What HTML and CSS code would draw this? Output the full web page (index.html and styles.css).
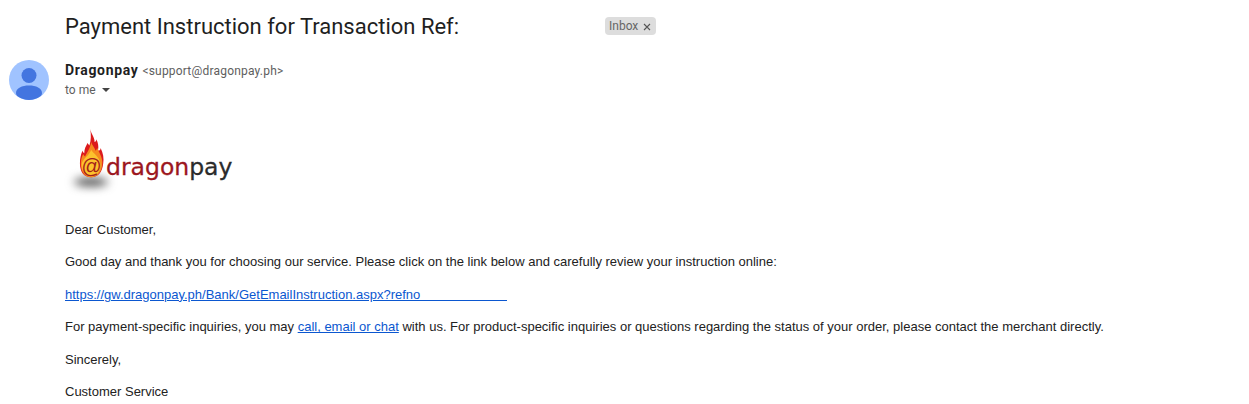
FILE: index.html
```html
<!DOCTYPE html>
<html lang="en">
<head>
  <meta charset="UTF-8">
  <title>Payment Instruction</title>
  <link rel="stylesheet" href="styles.css">
</head>
<body>

  <!-- Subject -->
  <div class="subject">
    <h1 class="subject-title">Payment Instruction for Transaction Ref:</h1>
    <span class="label">Inbox
      <svg class="label-x" viewBox="0 0 8 8" width="8" height="8">
        <path d="M1 1l6 6M7 1l-6 6" stroke="#555" stroke-width="1.1" fill="none"/>
      </svg>
    </span>
  </div>

  <!-- Sender -->
  <div class="sender">
    <svg class="avatar" viewBox="0 0 40 40" width="40" height="40">
      <circle cx="20" cy="20" r="20" fill="#a0c3ff"/>
      <circle cx="20" cy="15.5" r="7.5" fill="#4375e0"/>
      <path d="M7 33c0-5 6-7.500 13-7.500S33 28 33 33c0 2-1 3-2 3.500C28 38.800 24 40 20 40s-8-1.200-11-3.500C8 36 7 35 7 33z" fill="#4375e0"/>
    </svg>
    <div class="sender-info">
      <div class="sender-line">
        <span class="sender-name">Dragonpay</span>
        <span class="sender-mail">&lt;support@dragonpay.ph&gt;</span>
      </div>
      <div class="to-line">to me <span class="caret"></span></div>
    </div>
  </div>

  <!-- Message -->
  <div class="message">
    <div class="logo">
      <span class="logo-shadow"></span>
      <svg class="logo-flame" viewBox="0 0 30 58" width="26" height="50">
        <path d="M13 0c1 6 5 9 5 15 1 0 2-1 2-3 2 4 3 8 2 13 2 0 3-1 3-3 3 6 4 12 3 18-1 10-6 16-14 16S1 50 1 40c0-6 1-10 3-15 0 1 1 3 2 3 0-5 2-8 4-12 0 1 1 2 2 3 2-6 2-12 1-19z" fill="#dc1a1c"/>
        <path d="M14 15c1 4 4 6 5 10 1 0 1-1 2-3 2 5 6 10 6 17 0 10-5 17-13 17S2 49 2 40c0-4 1-8 3-11 0 1 1 2 2 3 2-5 6-9 7-17z" fill="#f6891f"/>
        <path d="M14 24c2 4 10 8 11 17 0 8-4 14-11 14S3 49 3 41c1-7 9-10 11-17z" fill="#fcc22d"/>
        <text x="14.500" y="51" class="logo-at">@</text>
      </svg>
      <span class="logo-text"><span class="logo-red">dragon</span>pay</span>
    </div>
    <p>Dear Customer,</p>
    <p>Good day and thank you for choosing our service. Please click on the link below and carefully review your instruction online:</p>
    <p><a href="#">https://gw.dragonpay.ph/Bank/GetEmailInstruction.aspx?refno&nbsp;&nbsp;&nbsp;&nbsp;&nbsp;&nbsp;&nbsp;&nbsp;&nbsp;&nbsp;&nbsp;&nbsp;&nbsp;&nbsp;&nbsp;&nbsp;&nbsp;&nbsp;&nbsp;&nbsp;&nbsp;&nbsp;&nbsp;&nbsp;</a></p>
    <p>For payment-specific inquiries, you may <a href="#">call, email or chat</a> with us. For product-specific inquiries or questions regarding the status of your order, please contact the merchant directly.</p>
    <p>Sincerely,</p>
    <p>Customer Service</p>
  </div>

</body>
</html>
```

FILE: styles.css
```css
* {
  box-sizing: border-box;
}

html, body {
  height: 100%;
  overflow: hidden;
}

body {
  margin: 0;
  background: #fff;
  color: #222;
  font-family: 'Liberation Sans', Arial, sans-serif;
}

.subject {
  display: flex;
  align-items: center;
  height: 52px;
  padding-left: 65px;
}

.subject-title {
  margin: 0;
  width: 540px;
  font-family: 'Roboto', sans-serif;
  font-size: 22px;
  font-weight: 400;
  color: #1f1f1f;
}

.label {
  display: flex;
  align-items: center;
  gap: 5px;
  padding: 1px 5px 1px 4px;
  border-radius: 4px;
  background: #dddddd;
  color: #666;
  font-family: 'Roboto', sans-serif;
  font-size: 12px;
  line-height: 16px;
}

.label-x {
  margin-top: 2px;
}

.sender {
  display: flex;
  height: 54px;
  margin-top: 8px;
  padding-left: 9px;
}

.avatar {
  flex: none;
}

.sender-info {
  margin-left: 16px;
  font-family: 'Roboto', sans-serif;
}

.sender-line {
  height: 20px;
  line-height: 20px;
}

.sender-name {
  color: #1f1f1f;
  font-size: 14px;
  font-weight: 700;
  letter-spacing: 0.65px;
}

.sender-mail {
  color: #5e5e5e;
  font-size: 12px;
  letter-spacing: 0.2px;
}

.to-line {
  display: flex;
  align-items: center;
  gap: 6px;
  height: 20px;
  color: #5e5e5e;
  font-size: 12px;
}

.caret {
  width: 0;
  height: 0;
  border-left: 4px solid transparent;
  border-right: 4px solid transparent;
  border-top: 4px solid #444;
}

.message {
  padding-left: 65px;
  font-size: 13px;
  line-height: 18px;
}

.message p {
  margin: 0 0 14.4px;
}

.message a {
  color: #0b57d0;
}

.logo {
  position: relative;
  display: flex;
  align-items: center;
  height: 107px;
  padding: 0 0 22px 14px;
}

.logo-flame {
  position: relative;
  flex: none;
  margin-bottom: 6px;
}

.logo-at {
  fill: #a3201a;
  font-family: 'Liberation Sans', sans-serif;
  font-size: 23px;
  text-anchor: middle;
}

.logo-shadow {
  position: absolute;
  left: 9px;
  top: 64px;
  width: 34px;
  height: 8px;
  border-radius: 50%;
  background: #444;
  filter: blur(5px);
}

.logo-text {
  margin: 20px 0 0 1px;
  color: #2b2b2b;
  font-family: 'DejaVu Sans', sans-serif;
  font-size: 23.5px;
  line-height: 32px;
  -webkit-text-stroke: 0.3px;
}

.logo-red {
  color: #9c1620;
}
```
